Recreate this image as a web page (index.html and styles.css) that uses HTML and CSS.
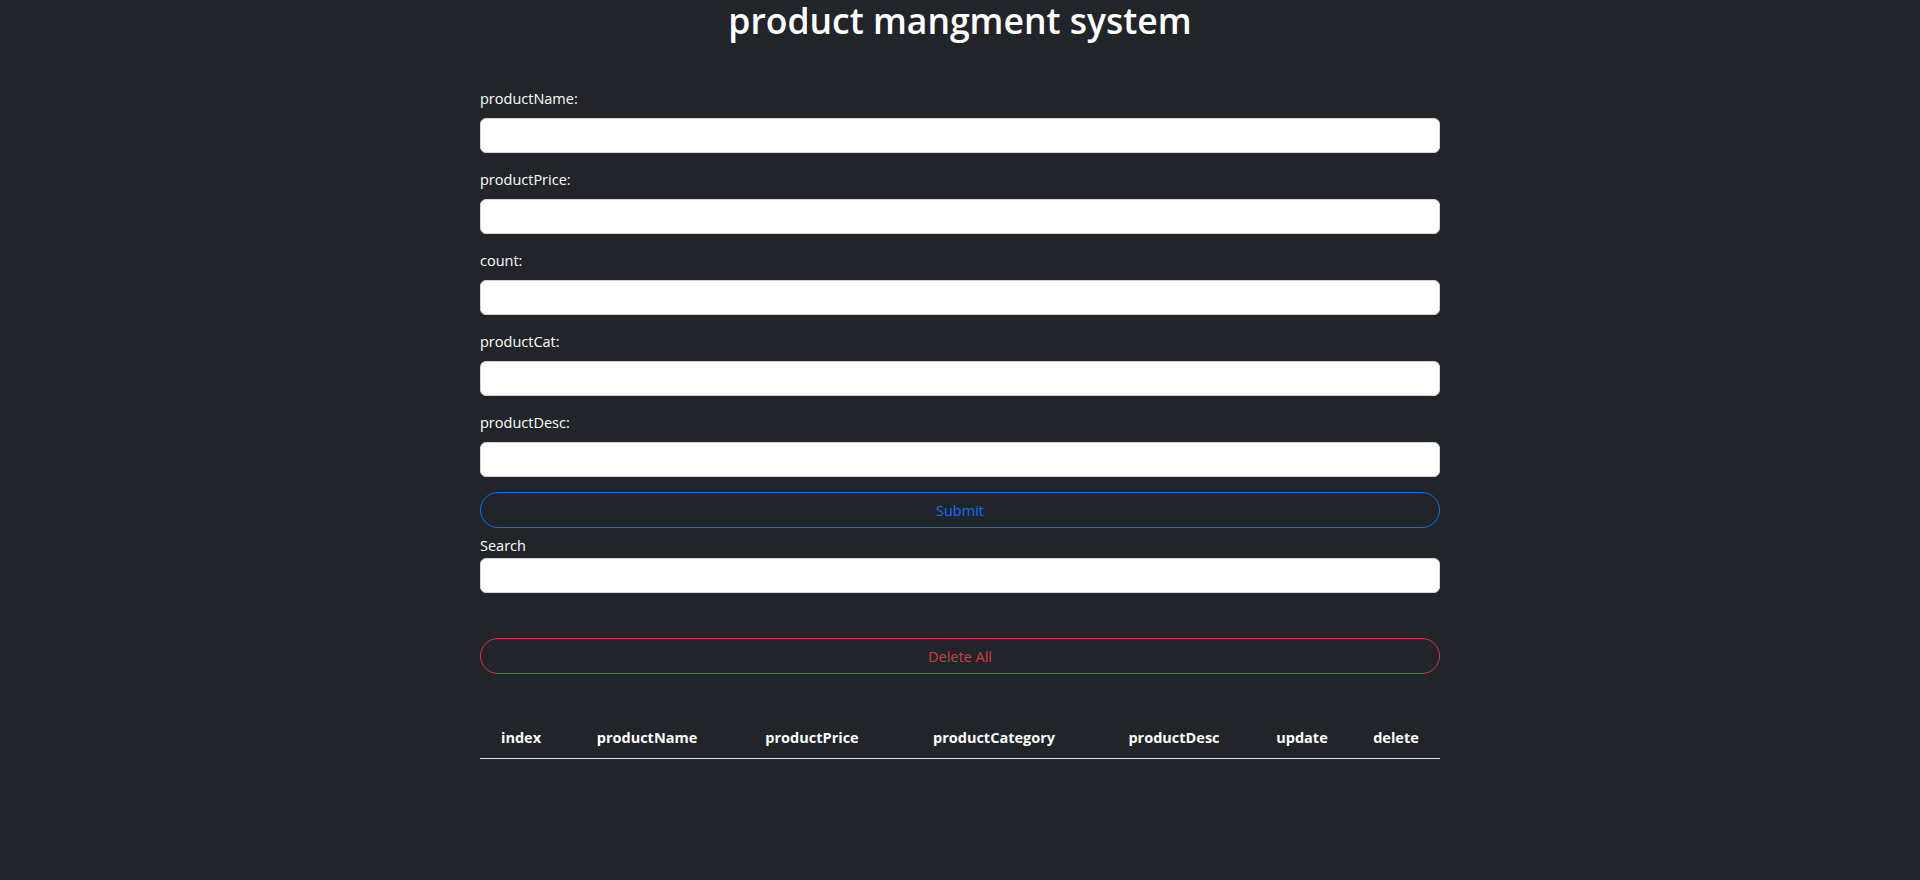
FILE: index.html
```html
<!DOCTYPE html>
<html lang="en">
<head>
<meta charset="utf-8">
<title>product mangment system</title>
<link rel="stylesheet" href="styles.css">
</head>
<body>
  <h1 class="title">product mangment system</h1>
  <main class="container">
    <form class="product-form">
      <div class="field">
        <label class="field-label" for="pname">productName:</label>
        <input class="field-input" id="pname" type="text">
      </div>
      <div class="field">
        <label class="field-label" for="pprice">productPrice:</label>
        <input class="field-input" id="pprice" type="text">
      </div>
      <div class="field">
        <label class="field-label" for="pcount">count:</label>
        <input class="field-input" id="pcount" type="text">
      </div>
      <div class="field">
        <label class="field-label" for="pcat">productCat:</label>
        <input class="field-input" id="pcat" type="text">
      </div>
      <div class="field">
        <label class="field-label" for="pdesc">productDesc:</label>
        <input class="field-input" id="pdesc" type="text">
      </div>
      <button type="button" class="pill-btn pill-primary">Submit</button>
    </form>

    <div class="search">
      <label class="search-label" for="search">Search</label>
      <input class="field-input" id="search" type="text">
    </div>

    <button type="button" class="pill-btn pill-danger delete-all">Delete All</button>

    <table class="products">
      <thead>
        <tr>
          <th class="col-index">index</th>
          <th class="col-name">productName</th>
          <th class="col-price">productPrice</th>
          <th class="col-cat">productCategory</th>
          <th class="col-desc">productDesc</th>
          <th class="col-update">update</th>
          <th class="col-delete">delete</th>
        </tr>
      </thead>
      <tbody></tbody>
    </table>
  </main>
</body>
</html>
```

FILE: styles.css
```css
* {
  box-sizing: border-box;
}

html, body {
  margin: 0;
  padding: 0;
}

body {
  background: #212529;
  color: #ffffff;
  font-family: "Open Sans", "Noto Sans", sans-serif;
  font-size: 14.5px;
  min-height: 880px;
}

.title {
  margin: 0 0 47px;
  text-align: center;
  font-size: 35.5px;
  font-weight: 600;
  line-height: 40px;
}

.container {
  width: 960px;
  margin: 0 auto;
}

.product-form {
  display: flex;
  flex-direction: column;
}

.field {
  display: flex;
  flex-direction: column;
  margin-bottom: 15px;
}

.field-label {
  line-height: 24px;
  margin-bottom: 7px;
}

.field-input {
  display: block;
  width: 100%;
  height: 35px;
  border: 1px solid #ced4da;
  border-radius: 6px;
  background: #ffffff;
  font: inherit;
  padding: 0 12px;
}

.pill-btn {
  display: flex;
  align-items: center;
  justify-content: center;
  width: 100%;
  height: 36px;
  border-radius: 18px;
  background: transparent;
  font: inherit;
  padding: 0;
  cursor: pointer;
}

.pill-primary {
  border: 1px solid #0d6efd;
  color: #0d6efd;
}

.pill-danger {
  border: 1px solid #dc3545;
  color: #dc3545;
}

.search {
  display: flex;
  flex-direction: column;
  margin-top: 6px;
}

.search-label {
  line-height: 24px;
}

.delete-all {
  margin-top: 45px;
}

.products {
  width: 100%;
  margin-top: 44px;
  border-collapse: collapse;
  table-layout: fixed;
}

.products th {
  padding: 8px;
  line-height: 24px;
  font-weight: 700;
  text-align: center;
  border-bottom: 1px solid #dee2e6;
}

.col-index { width: 82px; }
.col-name { width: 170px; }
.col-price { width: 160px; }
.col-cat { width: 204px; }
.col-desc { width: 156px; }
.col-update { width: 100px; }
.col-delete { width: 88px; }
```
